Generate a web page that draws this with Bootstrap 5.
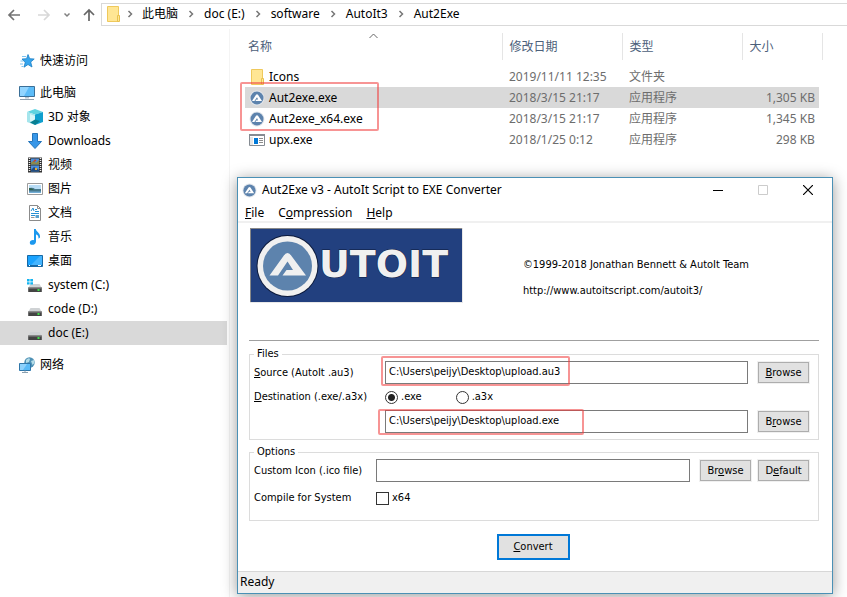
<!DOCTYPE html>
<html lang="zh-CN">
<head>
<meta charset="utf-8">
<meta name="viewport" content="width=device-width, initial-scale=1">
<title>Aut2Exe</title>
<link href="https://cdn.jsdelivr.net/npm/bootstrap@5.3.0/dist/css/bootstrap.min.css" rel="stylesheet">
<style>
  body { font-family: "Noto Sans", "Noto Sans CJK SC", sans-serif; font-size: 12px; line-height: 20px; color: #000; background: #fff; }
  svg { display: block; flex: none; }
  a { color: inherit; text-decoration: none; }

  /* Address bar */
  .addr-bar { height: 29px; padding: 3px 0 3px 7px; }
  .nav-btn { border: 0; background: none; padding: 0; }
  .crumbs { border: 1px solid #d9d9d9; border-right: 0; padding-left: 3px; margin-left: 6px; line-height: 18px; padding-bottom: 2px; }
  .crumbs svg.sep { margin: 0 10px; }
  .crumbs svg.first { margin: 0 9px 0 6px; }

  /* Folder tree */
  .tree { width: 230px; padding-top: 20px; border-right: 1px solid #f4f4f4; }
  .tree a { display: flex; align-items: center; gap: 5px; height: 24px; padding-left: 19px; margin-right: 2px; }
  .tree .sub { padding-left: 27px; }
  .tree .picked { background: #d9d9d9; }
  .tree .gap-below { margin-bottom: 8px; }

  /* File list */
  .files { padding: 4px 28px 0 15px; }
  .files table { table-layout: fixed; }
  .files th { height: 27px; font-weight: 400; color: #4c607a; padding: 0 0 0 6px; border-left: 1px solid #e5e5e5; position: relative; }
  .files th:first-child { border-left: 0; padding-left: 3px; }
  .files th.last::after { content: ""; position: absolute; top: 0; bottom: 0; right: -4px; border-right: 1px solid #e5e5e5; }
  .files .sort { position: absolute; left: 48%; top: 0; }
  .files td { height: 21px; padding: 0 4px 0 6px; color: #6d6d6d; white-space: nowrap; }
  .files td:first-child { padding-left: 4px; color: #000; }
  .files tbody::before { content: ""; display: block; height: 6px; }
  .files .picked { background: #d9d9d9; }
  .col-mid { width: 120px; }
  .col-size { width: 76px; }

  /* Converter window */
  .win { position: absolute; left: 237px; right: 14px; top: 177px; background: #fff; border: 1px solid #4a90b5; box-shadow: 0 2px 14px rgba(0,0,0,.4); }
  .win-title { height: 24px; padding: 0 2px 0 4px; gap: 5px; }
  .win-title button { width: 45px; border: 0; background: none; padding: 0; display: flex; justify-content: center; }
  .win-menu { height: 21px; padding: 2px 0 0 7px; gap: 14px; border-bottom: 2px solid #f0f0f0; }
  .win-menu button { border: 0; background: none; padding: 0; line-height: 17px; }
  .win-body { font-family: "DejaVu Sans Condensed", "Noto Sans", sans-serif; font-size: 11px; line-height: 14px; padding: 5px 13px 0 11px; }
  .brand { min-height: 113px; border-bottom: 1px solid #a0a0a0; margin-bottom: 6px; }
  .brand svg { margin-left: 1px; }
  .credits { margin: 30px 70px 0 0; }
  .credits p { margin-bottom: 12px; }
  fieldset.group { border: 1px solid #dcdcdc; padding: 0 9px 6px 4px; margin-bottom: 5px; }
  .group legend { float: none; width: auto; font-size: 11px; line-height: 14px; padding: 0 3px; margin: 0; }
  .form-rows { display: grid; grid-template-columns: 121px 1fr auto; column-gap: 10px; align-items: center; }
  .form-rows.options { grid-template-columns: 112px 1fr auto; }
  .box { display: block; width: 100%; height: 23px; border: 1px solid #7a7a7a; border-radius: 0; padding: 0 3px 2px; background: #fff; color: #000; }
  .push { width: 51px; height: 21px; border: 1px solid #adadad; background: #e1e1e1; padding: 0; outline: 1px solid #f0f0f0; color: #000; }
  .push-pair { gap: 7px; }
  .choices { height: 26px; gap: 34px; }
  .check-row { height: 32px; }
  .tick { appearance: none; width: 13px; height: 13px; border: 1px solid #333; background: #fff; margin: 0 3px 0 0; }
  .tick[type=radio] { border-radius: 50%; }
  .tick[type=radio]:checked { background: radial-gradient(circle, #222 3px, #fff 4px); }
  .convert-row { padding: 8px 2px 11px 0; }
  .convert { width: 73px; height: 26px; border: 2px solid #0078d7; background: #e1e1e1; padding: 0; vertical-align: top; }
  .status { height: 22px; background: #f0f0f0; border-top: 1px solid #d7d7d7; padding-left: 2px; }

  /* Highlight frames laid over the screen */
  .frame { position: absolute; border: 2px solid rgba(240,60,60,.55); border-radius: 2px; pointer-events: none; }
  .frame-files { left: -5px; top: 49px; width: 139px; height: 49px; }
  .frame-src { left: -4px; top: -5px; width: 189px; height: 30px; }
  .frame-dst { left: -7px; top: -1px; width: 206px; height: 26px; }
</style>
<script src="https://cdn.jsdelivr.net/npm/bootstrap@5.3.0/dist/js/bootstrap.bundle.min.js"></script>
</head>
<body class="vh-100 overflow-hidden position-relative d-flex flex-column">

<svg width="0" height="0" class="position-absolute" aria-hidden="true">
  <symbol id="i-chev" viewBox="0 0 6 8"><path d="M1.500 1l3 3-3 3" fill="none" stroke="#777" stroke-width="1.500"/></symbol>
  <symbol id="i-folder" viewBox="0 0 16 16"><path d="M2.500.5h11v15h-11z" fill="#ffe694" stroke="#efc95c"/><path d="M12.500 9.500h2v6h-2z" fill="#ffe694" stroke="#e8c14e"/></symbol>
  <symbol id="i-autoit" viewBox="0 0 16 16"><circle cx="8" cy="8" r="7.500" fill="#e3e7ec"/><circle cx="8" cy="8" r="6.500" fill="#5d83ad"/><path d="M3 11l4-6.200q1-1.300 2 0L13 11H6.300l1.200-1.600h1.700L8 7.300 5.400 11z" fill="#fff"/></symbol>
  <symbol id="i-drive" viewBox="0 0 16 16"><path d="M3.500 7h9l2.300 4H1.200z" fill="#cfd2d4"/><path d="M1.200 10.500h13.600V15H1.200z" fill="#444"/><path d="M1.200 10.500h13.600v1H1.200z" fill="#888"/><path d="M10.500 12h2v2h-2z" fill="#3ee04a"/></symbol>
</svg>

<header class="addr-bar d-flex align-items-stretch">
  <button class="nav-btn" aria-label="后退"><svg width="14" height="14" viewBox="0 0 14 14"><path d="M13 7H2M7 2L2 7l5 5" fill="none" stroke="#737373" stroke-width="1.700"/></svg></button>
  <button class="nav-btn ms-3" aria-label="前进"><svg width="14" height="14" viewBox="0 0 14 14"><path d="M1 7h11M7 2l5 5-5 5" fill="none" stroke="#d8d8d8" stroke-width="1.700"/></svg></button>
  <button class="nav-btn ms-2 ps-1" aria-label="最近浏览的位置"><svg width="8" height="14" viewBox="0 0 8 14"><path d="M1.500 5.500L4 8l2.500-2.500" fill="none" stroke="#808080" stroke-width="1.500"/></svg></button>
  <button class="nav-btn ms-2 ps-1" aria-label="上移"><svg width="12" height="14" viewBox="0 0 12 14"><path d="M6 13V2M1 7l5-5 5 5" fill="none" stroke="#666" stroke-width="1.700"/></svg></button>
  <nav class="crumbs d-flex align-items-center flex-grow-1" aria-label="路径">
    <svg width="16" height="16"><use href="#i-folder"/></svg>
    <svg class="sep first" width="6" height="8"><use href="#i-chev"/></svg><a href="#">此电脑</a>
    <svg class="sep" width="6" height="8"><use href="#i-chev"/></svg><a href="#">doc (E:)</a>
    <svg class="sep" width="6" height="8"><use href="#i-chev"/></svg><a href="#">software</a>
    <svg class="sep" width="6" height="8"><use href="#i-chev"/></svg><a href="#">AutoIt3</a>
    <svg class="sep" width="6" height="8"><use href="#i-chev"/></svg><a href="#">Aut2Exe</a>
  </nav>
</header>

<div class="d-flex flex-grow-1">
  <nav class="tree flex-shrink-0" aria-label="文件夹">
    <a href="#" class="gap-below"><svg width="16" height="16" viewBox="0 0 16 16"><path d="M9 1.500l1.700 4.200 4.500.3-3.500 3 1.300 5-4-2.500-4 2.700 1.200-4.700L3 6l4.600-.3z" fill="#35a5ee" stroke="#1c7fc4" stroke-width=".8"/><path d="M3 3.500h4M1.500 8h2.500M1 11h3M2.500 13.500h2" stroke="#7cc4f2"/></svg>快速访问</a>
    <a href="#"><svg width="16" height="16" viewBox="0 0 16 16"><path d="M.5 1.500h15v10H.5z" fill="#5cbcf8" stroke="#3b6f97"/><path d="M1 2h9L5 11H1z" fill="#92d5ff"/><path d="M6 12h4v1.500H6z" fill="#b8c5cf"/><path d="M1 14.500h14" stroke="#8fa0ae"/></svg>此电脑</a>
    <a href="#" class="sub"><svg width="16" height="16" viewBox="0 0 16 16"><path d="M0 3l8-3 8 3-8 2.500z" fill="#5fd3e0"/><path d="M0 3l8 2.500V16l-8-3z" fill="#a5e5ec"/><path d="M16 3L8 5.500V16l8-3z" fill="#109fce"/><path d="M3 5l5 2v7l-5-2z" fill="#d8f6f8"/><path d="M8 10.500l5 1.500-5 4-5-2.500z" fill="#087f92"/></svg>3D 对象</a>
    <a href="#" class="sub"><svg width="16" height="16" viewBox="0 0 16 16"><path d="M5.500.5h5v8h4L8 15.500 1.500 8.500h4z" fill="#3897e8" stroke="#2475bb"/></svg>Downloads</a>
    <a href="#" class="sub"><svg width="16" height="16" viewBox="0 0 16 16"><path d="M1 .5h14v15H1z" fill="#333"/><path d="M4 1.500h8v6H4zM4 8.500h8v6H4z" fill="#4a8fdc"/><path d="M4 5.500l3-2 2 2.500 3-3v4.500H4z" fill="#8a8a4a"/><path d="M6 5l2-3 1.500 2z" fill="#c9402d"/><path d="M4 13l3-3 5 3v1.500H4z" fill="#244c7d"/><path d="M8 11h2v2H8z" fill="#e7ad32"/><path d="M2.500 1v14M13.500 1v14" stroke="#eee" stroke-width="1.500" stroke-dasharray="1 1"/></svg>视频</a>
    <a href="#" class="sub"><svg width="16" height="16" viewBox="0 0 16 16"><path d="M.5 2.500h15v11H.5z" fill="#fff" stroke="#9b9b9b"/><path d="M2 4h12v8H2z" fill="#b8dcf5"/><path d="M2 7q4-1 6 1h6v4H2z" fill="#47798c"/><path d="M2 7q3 0 5 2H2z" fill="#2f604d"/><path d="M2 10.500h12V12H2z" fill="#74aed6"/></svg>图片</a>
    <a href="#" class="sub"><svg width="16" height="16" viewBox="0 0 16 16"><path d="M2.500.5h8l3 3v12h-11z" fill="#fff" stroke="#8b8b8b"/><path d="M10.500.5v3h3" fill="none" stroke="#8b8b8b"/><path d="M4 6l2-3 1 3M8 4.500h2M8 6.500h4M4 8.500h8M4 10.500h4" fill="none" stroke="#2590d4"/><path d="M8.500 10h3.500v3H8.500z" fill="#58a0ce"/><path d="M4 12.500h3.500" stroke="#999"/></svg>文档</a>
    <a href="#" class="sub"><svg width="16" height="16" viewBox="0 0 16 16"><path d="M7 0h1.800c.2 3 4.700 3.500 4.200 8.500l-1.500 1.200c.3-2.700-1-3.900-2.500-4.200v7c0 4-6.200 4.500-6.200 1.200 0-2.200 2.200-3 4.200-2.500z" fill="#1b98ee"/></svg>音乐</a>
    <a href="#" class="sub"><svg width="16" height="16" viewBox="0 0 16 16"><path d="M.5 2.500h15v11H.5z" fill="#1aa3ff" stroke="#1769a5"/><path d="M4 12L13 3h2v9z" fill="#45b5ff"/><path d="M1 12.500h14" stroke="#1769a5"/><path d="M2 12.500h1M11 12.500h3" stroke="#fff"/></svg>桌面</a>
    <a href="#" class="sub"><svg width="16" height="16" viewBox="0 0 16 16"><use href="#i-drive"/><path d="M0 2h2.600v2.400H0zM3.300 2H6v2.400H3.300zM0 5.200h2.600v2.400H0zM3.300 5.200H6v2.400H3.300z" fill="#13b4f0"/></svg>system (C:)</a>
    <a href="#" class="sub"><svg width="16" height="16"><use href="#i-drive"/></svg>code (D:)</a>
    <a href="#" class="sub picked gap-below" aria-current="true"><svg width="16" height="16"><use href="#i-drive"/></svg>doc (E:)</a>
    <a href="#"><svg width="16" height="16" viewBox="0 0 16 16"><circle cx="10.500" cy="5.500" r="5.200" fill="#4f91b5"/><path d="M7 3q3-3 4-1l-1 3-3 1zM12 4l3-1 .5 3-2 2z" fill="#b3dce8"/><path d="M.5 6.500h11v7H.5z" fill="#59baf7" stroke="#2f76a9"/><path d="M1 7h7l-4 6H1z" fill="#8dd1fc"/><path d="M3 15.500h6M6 13.500v2" stroke="#8aa0b0"/></svg>网络</a>
  </nav>

  <main class="files flex-grow-1">
    <div class="position-relative">
      <table class="w-100">
        <colgroup><col><col class="col-mid"><col class="col-mid"><col class="col-size"></colgroup>
        <thead>
          <tr>
            <th>名称<svg class="sort" width="9" height="6" viewBox="0 0 9 6"><path d="M.5 5l4-4 4 4" fill="none" stroke="#666"/></svg></th>
            <th>修改日期</th><th>类型</th><th class="last">大小</th>
          </tr>
        </thead>
        <tbody>
          <tr><td><span class="d-flex align-items-center gap-1"><svg width="16" height="16"><use href="#i-folder"/></svg>Icons</span></td><td>2019/11/11 12:35</td><td>文件夹</td><td></td></tr>
          <tr class="picked"><td><span class="d-flex align-items-center gap-1"><svg width="16" height="16"><use href="#i-autoit"/></svg>Aut2exe.exe</span></td><td>2018/3/15 21:17</td><td>应用程序</td><td class="text-end">1,305 KB</td></tr>
          <tr><td><span class="d-flex align-items-center gap-1"><svg width="16" height="16"><use href="#i-autoit"/></svg>Aut2exe_x64.exe</span></td><td>2018/3/15 21:17</td><td>应用程序</td><td class="text-end">1,345 KB</td></tr>
          <tr><td><span class="d-flex align-items-center gap-1"><svg width="16" height="16" viewBox="0 0 16 16"><path d="M.5 2.500h15v11H.5z" fill="#fff" stroke="#858b92"/><path d="M0 2h16v2H0z" fill="#858b92"/><path d="M1 5h3v8H1z" fill="#e5e5e5"/><path d="M5 6h4v6H5z" fill="#0078d7"/><path d="M10 6.500h4M10 8.500h4M10 10.500h4" stroke="#8c8c8c"/></svg>upx.exe</span></td><td>2018/1/25 0:12</td><td>应用程序</td><td class="text-end">298 KB</td></tr>
        </tbody>
      </table>
      <div class="frame frame-files"></div>
    </div>
  </main>
</div>

<section class="win" role="dialog" aria-labelledby="win-name">
  <div class="win-title d-flex align-items-center">
    <svg width="15" height="15"><use href="#i-autoit"/></svg>
    <span id="win-name" class="flex-grow-1">Aut2Exe v3 - AutoIt Script to EXE Converter</span>
    <div class="d-flex">
      <button aria-label="Minimize"><svg width="10" height="10" viewBox="0 0 10 10"><path d="M0 5.500h10" stroke="#000"/></svg></button>
      <button aria-label="Maximize" disabled><svg width="10" height="10" viewBox="0 0 10 10"><path d="M.5.5h9v9h-9z" fill="none" stroke="#ccc"/></svg></button>
      <button aria-label="Close"><svg width="10" height="10" viewBox="0 0 10 10"><path d="M0 0l10 10M10 0L0 10" stroke="#000" stroke-width="1.200"/></svg></button>
    </div>
  </div>
  <div class="win-menu d-flex align-items-center">
    <button><u>F</u>ile</button><button>C<u>o</u>mpression</button><button><u>H</u>elp</button>
  </div>

  <div class="win-body">
    <div class="brand d-flex justify-content-between align-items-start">
      <svg width="213" height="75" viewBox="0 0 213 75" role="img" aria-label="AutoIt">
        <path d="M0 0h213v75H0z" fill="#e8e8e8"/><path d="M0 0h212v1H1v73H0z" fill="#888"/><path d="M1 1h211v73H1z" fill="#22407f"/>
        <circle cx="37.500" cy="38" r="31" fill="#0c1a3c"/><circle cx="37.500" cy="38" r="30" fill="#f0f0f0"/><circle cx="37.500" cy="38" r="24.500" fill="#5d83ad"/>
        <path d="M19.500 47.500L33.500 28Q37.500 22 41.500 28L56 47.500H32.500L36.500 42H43L37.500 33.500 28 47.500z" fill="#f0f0f0"/>
        <text x="69" y="49" font-family="DejaVu Sans, sans-serif" font-weight="700" font-size="38" fill="#f0f0f0" stroke="#0c1a3c" stroke-width="1" paint-order="stroke">UTOIT</text>
      </svg>
      <div class="credits">
        <p>©1999-2018 Jonathan Bennett &amp; AutoIt Team</p>
        <p><a href="#">http://www.autoitscript.com/autoit3/</a></p>
      </div>
    </div>

    <fieldset class="group">
      <legend>Files</legend>
      <div class="form-rows">
        <label for="src"><u>S</u>ource (AutoIt .au3)</label>
        <div class="position-relative"><input class="box" id="src" type="text" value="C:\Users\peijy\Desktop\upload.au3"><div class="frame frame-src"></div></div>
        <button class="push"><u>B</u>rowse</button>

        <label for="dst" class="text-nowrap"><u>D</u>estination (.exe/.a3x)</label>
        <div class="choices d-flex align-items-center">
          <label class="d-flex align-items-center"><input class="tick" type="radio" name="kind" checked>.exe</label>
          <label class="d-flex align-items-center"><input class="tick" type="radio" name="kind">.a3x</label>
        </div>
        <span></span>

        <span></span>
        <div class="position-relative"><input class="box" id="dst" type="text" value="C:\Users\peijy\Desktop\upload.exe"><div class="frame frame-dst"></div></div>
        <button class="push">B<u>r</u>owse</button>
      </div>
    </fieldset>

    <fieldset class="group">
      <legend>Options</legend>
      <div class="form-rows options">
        <label for="ico">Custom Icon (.ico file)</label>
        <input class="box" id="ico" type="text">
        <div class="push-pair d-flex"><button class="push">Br<u>o</u>wse</button><button class="push">D<u>e</u>fault</button></div>
        <label for="x64">Compile for System</label>
        <div class="check-row d-flex align-items-center"><input class="tick" id="x64" type="checkbox"><label for="x64">x64</label></div>
      </div>
    </fieldset>

    <div class="convert-row text-center"><button class="convert"><u>C</u>onvert</button></div>
  </div>
  <div class="status">Ready</div>
</section>
</body>
</html>
